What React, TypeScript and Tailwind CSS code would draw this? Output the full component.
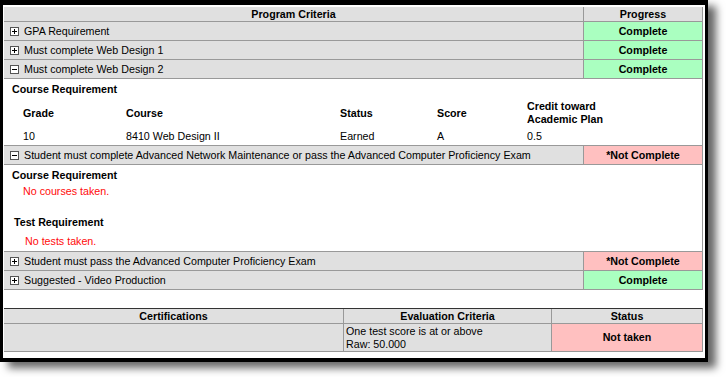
// Program criteria / progress report panel

type Status = 'Complete' | '*Not Complete';

function ToggleIcon({ open }: { open: boolean }) {
  return (
    <svg width="9" height="9" viewBox="0 0 9 9" className="shrink-0">
      <rect x="0.5" y="0.5" width="8" height="8" fill="#fff" stroke="#555" />
      <line x1="2" y1="4.5" x2="7" y2="4.5" stroke="#000" />
      {!open && <line x1="4.5" y1="2" x2="4.5" y2="7" stroke="#000" />}
    </svg>
  );
}

function CriteriaRow({ label, status, open = false }: { label: string; status: Status; open?: boolean }) {
  const done = status === 'Complete';
  return (
    <div className="flex h-[19px] border-b border-[#999]">
      <div className="flex w-[580px] items-center border-r border-[#999] bg-[#e0e0e0] pl-[6px]">
        <ToggleIcon open={open} />
        <span className="ml-[5px]">{label}</span>
      </div>
      <div className={`flex flex-1 items-center justify-center font-bold ${done ? 'bg-[#aaffc0]' : 'bg-[#ffc0c0]'}`}>
        {status}
      </div>
    </div>
  );
}

export default function App() {
  return (
    <div className="h-[377px] w-[726px] bg-white text-[10.7px] leading-[13px] text-black font-['Liberation_Sans',Arial,sans-serif]">
      <div className="w-[708px] border-t-[5px] border-r-[3px] border-b-[4px] border-l-[3px] border-black bg-white pt-[2px] pr-[2px] pb-[6px] pl-px shadow-[8px_6px_8px_rgba(0,0,0,0.6)]">

        {/* ── Program criteria table ── */}
        <div className="border-r border-[#999]">
          <div className="flex h-[15px] border-b border-[#999] bg-[#e0e0e0] font-bold">
            <div className="flex w-[580px] items-center justify-center border-r border-[#999]">Program Criteria</div>
            <div className="flex flex-1 items-center justify-center">Progress</div>
          </div>

          <CriteriaRow label="GPA Requirement" status="Complete" />
          <CriteriaRow label="Must complete Web Design 1" status="Complete" />
          <CriteriaRow label="Must complete Web Design 2" status="Complete" open />

          <div className="h-[67px] border-b border-[#999] pt-[4px]">
            <div className="pl-[8px] font-bold">Course Requirement</div>
            <div className="mt-[4px] grid grid-cols-[103px_214px_97px_90px_1fr] items-center pl-[19px] font-bold">
              <span>Grade</span>
              <span>Course</span>
              <span>Status</span>
              <span>Score</span>
              <span>Credit toward<br />Academic Plan</span>
            </div>
            <div className="mt-[4px] grid grid-cols-[103px_214px_97px_90px_1fr] pl-[19px]">
              <span>10</span>
              <span>8410 Web Design II</span>
              <span>Earned</span>
              <span>A</span>
              <span>0.5</span>
            </div>
          </div>

          <CriteriaRow
            label="Student must complete Advanced Network Maintenance or pass the Advanced Computer Proficiency Exam"
            status="*Not Complete"
            open
          />

          <div className="h-[87px] border-b border-[#999] pt-[4px]">
            <div className="pl-[8px] font-bold">Course Requirement</div>
            <div className="mt-[3px] pl-[19px] text-[#ff0a0a]">No courses taken.</div>
            <div className="mt-[18px] pl-[10px] font-bold">Test Requirement</div>
            <div className="mt-[6px] pl-[21px] text-[#ff0a0a]">No tests taken.</div>
          </div>

          <CriteriaRow label="Student must pass the Advanced Computer Proficiency Exam" status="*Not Complete" />
          <CriteriaRow label="Suggested - Video Production" status="Complete" />
        </div>

        {/* ── Certifications table ── */}
        <div className="mt-[18px] border-t border-r border-t-[#333] border-r-[#999]">
          <div className="flex h-[15px] border-b border-[#999] bg-[#e0e0e0] font-bold">
            <div className="flex w-[340px] items-center justify-center border-r border-[#999]">Certifications</div>
            <div className="flex w-[208px] items-center justify-center border-r border-[#999]">Evaluation Criteria</div>
            <div className="flex flex-1 items-center justify-center">Status</div>
          </div>
          <div className="flex h-[28px] border-b border-[#999]">
            <div className="w-[340px] border-r border-[#999] bg-[#e0e0e0]" />
            <div className="flex w-[208px] items-center border-r border-[#999] bg-[#e0e0e0] pl-[2px]">
              <span>One test score is at or above<br />Raw: 50.000</span>
            </div>
            <div className="flex flex-1 items-center justify-center bg-[#ffc0c0] font-bold">Not taken</div>
          </div>
        </div>
      </div>
    </div>
  );
}
